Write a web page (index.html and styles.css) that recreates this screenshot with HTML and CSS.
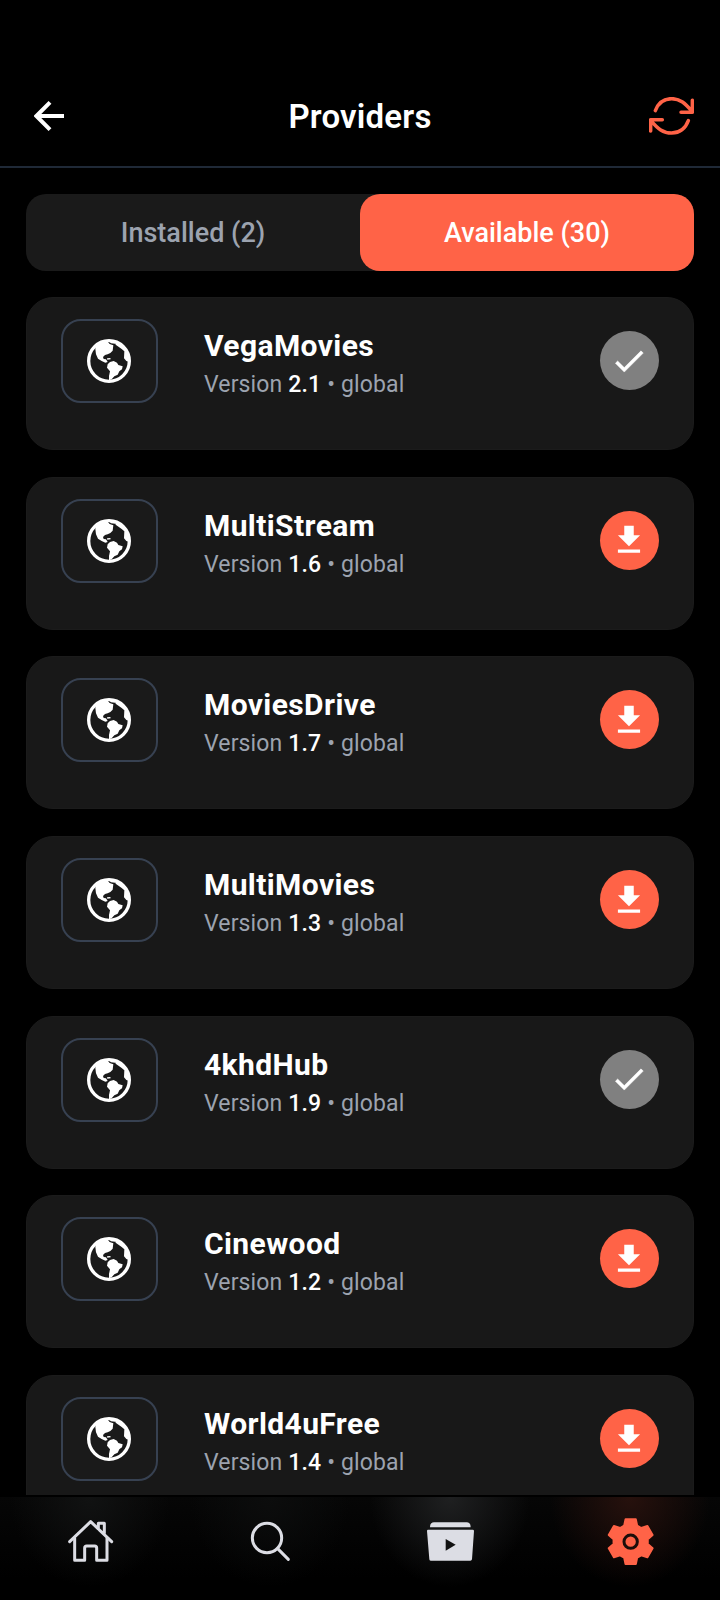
FILE: index.html
```
<!DOCTYPE html>
<html lang="en">
<head>
  <meta charset="UTF-8">
  <title>Providers</title>
  <link rel="stylesheet" href="styles.css">
</head>
<body>

  <!-- shared icons -->
  <svg class="sprite">
    <symbol id="globe" viewBox="0 0 132 132">
      <circle cx="66" cy="66" r="61" fill="none" stroke="#fff" stroke-width="10"/>
      <path fill="#fff" d="M26 22L42 8L60 6L68 15L79 19L77 35L70 42L62 46L54 48L48 54L50 60L57 61L62 69L55 71L44 66L33 59L27 46L25 30ZM60 58L70 57L71 61L61 62ZM69 69L80 66L90 71L94 78L107 82L105 91L97 97L92 107L82 112L74 121L66 124L66 111L69 97L60 86L62 76ZM64 5L88 8L84 14L72 13ZM84 8L112 22L128 48L129 70L118 66L111 58L112 37L104 30L86 17Z"/>
    </symbol>
    <symbol id="download" viewBox="0 0 24 24">
      <path fill="#fff" d="M19 9h-4V3H9v6H5l7 7 7-7zM5 18v2h14v-2H5z"/>
    </symbol>
    <symbol id="check" viewBox="0 0 24 24">
      <path fill="#fff" stroke="#fff" stroke-width=".3" d="M9 16.17L4.83 12l-1.42 1.41L9 19 21 7l-1.41-1.41z"/>
    </symbol>
  </svg>

  <header class="header">
    <svg class="back" viewBox="0 0 30 30"><path d="M30 15H3M16 1.4L2.4 15L16 28.6"/></svg>
    <h1>Providers</h1>
    <svg class="refresh" viewBox="0 0 135 114">
      <path d="M19 41C29 14 47 5 68 5C94 5 108 19 130 44M130 10V46H96M118 71C108 98 90 108 68 108C42 108 27 96 5 70M40 68H5V102"/>
    </svg>
  </header>

  <div class="tabs">
    <div class="tab">Installed (2)</div>
    <div class="tab active">Available (30)</div>
  </div>

  <main class="list">
    <div class="card">
      <div class="thumb"><svg><use href="#globe"/></svg></div>
      <div class="info">
        <h2>VegaMovies</h2>
        <p>Version <b>2.1</b> • global</p>
      </div>
      <div class="action done"><svg><use href="#check"/></svg></div>
    </div>
    <div class="card">
      <div class="thumb"><svg><use href="#globe"/></svg></div>
      <div class="info">
        <h2>MultiStream</h2>
        <p>Version <b>1.6</b> • global</p>
      </div>
      <div class="action"><svg><use href="#download"/></svg></div>
    </div>
    <div class="card">
      <div class="thumb"><svg><use href="#globe"/></svg></div>
      <div class="info">
        <h2>MoviesDrive</h2>
        <p>Version <b>1.7</b> • global</p>
      </div>
      <div class="action"><svg><use href="#download"/></svg></div>
    </div>
    <div class="card">
      <div class="thumb"><svg><use href="#globe"/></svg></div>
      <div class="info">
        <h2>MultiMovies</h2>
        <p>Version <b>1.3</b> • global</p>
      </div>
      <div class="action"><svg><use href="#download"/></svg></div>
    </div>
    <div class="card">
      <div class="thumb"><svg><use href="#globe"/></svg></div>
      <div class="info">
        <h2>4khdHub</h2>
        <p>Version <b>1.9</b> • global</p>
      </div>
      <div class="action done"><svg><use href="#check"/></svg></div>
    </div>
    <div class="card">
      <div class="thumb"><svg><use href="#globe"/></svg></div>
      <div class="info">
        <h2>Cinewood</h2>
        <p>Version <b>1.2</b> • global</p>
      </div>
      <div class="action"><svg><use href="#download"/></svg></div>
    </div>
    <div class="card">
      <div class="thumb"><svg><use href="#globe"/></svg></div>
      <div class="info">
        <h2>World4uFree</h2>
        <p>Version <b>1.4</b> • global</p>
      </div>
      <div class="action"><svg><use href="#download"/></svg></div>
    </div>
  </main>

  <nav class="navbar">
    <div class="nav-item home">
      <svg viewBox="-75 -76 150 150">
        <g fill="none" stroke="#dcdde4" stroke-width="9" stroke-linecap="round" stroke-linejoin="round">
          <path d="M-61 1L2 -59L65 1M25 -38V-54H43V-24"/>
          <path d="M-46 -9V57H-16V20Q-16 14 -10 14H14Q20 14 20 20V57H51V-9"/>
        </g>
      </svg>
    </div>
    <div class="nav-item search">
      <svg viewBox="-75 -76 150 150">
        <g fill="none" stroke="#dcdde4" stroke-width="9" stroke-linecap="round">
          <circle cx="-9" cy="-10" r="44"/>
          <path d="M23 22L55 54"/>
        </g>
      </svg>
    </div>
    <div class="nav-item library">
      <svg viewBox="-75 -76 150 150">
        <path fill="#dcdde4" d="M-60 -42Q-60 -57 -48 -57H50Q62 -57 62 -42ZM-66 -35H68Q72 -35 72 -31L66 54Q65 58 61 58H-58Q-62 58 -62 54L-69 -31Q-69 -35 -66 -35Z"/>
        <path fill="#111" d="M-13 -7L17 10L-13 28Z"/>
      </svg>
    </div>
    <div class="nav-item settings">
      <svg viewBox="-77 -77 150 150">
        <path fill="#ff6347" stroke="#ff6347" stroke-width="6" stroke-linejoin="round" d="M-15.5 -67H15.5L19.5 -48L31.8 -40.9L50.3 -46.9L65.8 -20.1L51.3 -7.1L51.3 7.1L65.8 20.1L50.3 46.9L31.8 40.9L19.5 48L15.5 67H-15.5L-19.5 48L-31.8 40.9L-50.3 46.9L-65.8 20.1L-51.3 7.1V-7.1L-65.8 -20.1L-50.3 -46.9L-31.8 -40.9L-19.5 -48Z"/>
        <circle r="20" fill="none" stroke="#1c0d0a" stroke-width="9"/>
      </svg>
    </div>
  </nav>

</body>
</html>
```
FILE: styles.css
```
:root {
  --accent: #ff6347;
  --card: #181818;
  --muted: #9ca3af;
}

* {
  box-sizing: border-box;
  margin: 0;
}

body {
  display: flex;
  flex-direction: column;
  height: 1600px;
  overflow: hidden;
  background: #000;
  color: #fff;
  font-family: Roboto, sans-serif;
}

.sprite {
  position: absolute;
  width: 0;
  height: 0;
}

/* Header */
.header {
  display: flex;
  flex: none;
  align-items: center;
  justify-content: space-between;
  height: 168px;
  padding: 66px 26px 0 34px;
  border-bottom: 2px solid #1f2937;
}
.header h1 {
  padding-top: 2px;
  font-size: 33px;
  font-weight: 600;
  letter-spacing: 0.2px;
  line-height: 40px;
}
.back {
  width: 30px;
  height: 30px;
  margin-right: 7px;
  fill: none;
  stroke: #fff;
  stroke-width: 4;
}
.refresh {
  width: 45px;
  height: 38px;
  fill: none;
  stroke: var(--accent);
  stroke-width: 10.5;
  stroke-linecap: round;
  stroke-linejoin: round;
}

/* Tabs */
.tabs {
  display: flex;
  flex: none;
  height: 77px;
  margin: 26px 26px 0;
  border-radius: 20px;
  background: #1a1a1a;
}
.tab {
  flex: 1;
  font-size: 27px;
  font-weight: 500;
  line-height: 78px;
  text-align: center;
  color: var(--muted);
}
.tab.active {
  border-radius: 20px;
  background: var(--accent);
  color: #fff;
}

/* Provider list */
.list {
  display: flex;
  flex: 1;
  flex-direction: column;
  gap: 26.7px;
  min-height: 0;
  padding: 26px 26px 0;
  overflow: hidden;
}
.card {
  display: flex;
  flex: none;
  align-items: flex-start;
  height: 153px;
  padding: 21px 34px;
  border: 1px solid #1b1b1b;
  border-radius: 27px;
  background: var(--card);
}
.thumb {
  display: flex;
  align-items: center;
  justify-content: center;
  width: 97px;
  height: 84px;
  padding-right: 2px;
  border: 2px solid #374151;
  border-radius: 20px;
  background: #1a1a1a;
}
.thumb svg {
  width: 44px;
  height: 44px;
}
.info {
  flex: 1;
  margin: 7px 0 0 46px;
}
.info h2 {
  font-size: 30px;
  font-weight: 700;
  letter-spacing: 0.4px;
  line-height: 40px;
}
.info p {
  font-size: 23px;
  letter-spacing: 0.15px;
  line-height: 38px;
  color: var(--muted);
}
.info b {
  font-weight: 500;
  color: #fff;
}
.action {
  display: flex;
  align-items: center;
  justify-content: center;
  width: 59px;
  height: 59px;
  margin-top: 12px;
  padding-right: 1px;
  border-radius: 50%;
  background: var(--accent);
}
.action.done {
  background: #808080;
}
.action svg {
  width: 38px;
  height: 38px;
}

/* Bottom bar */
.navbar {
  display: flex;
  flex: none;
  height: 103px;
  margin-top: 2px;
  background: linear-gradient(#060606, #000 80%);
}
.nav-item {
  display: flex;
  flex: 1;
  justify-content: center;
  padding-top: 19px;
  background: radial-gradient(80px 90px at 50% 0, var(--glow), transparent);
}
.nav-item svg {
  width: 50px;
  height: 50px;
}
.home {
  --glow: #111212;
}
.search {
  --glow: #0c0d0d;
}
.library {
  --glow: #1f2021;
}
.settings {
  --glow: #27110d;
}
```
